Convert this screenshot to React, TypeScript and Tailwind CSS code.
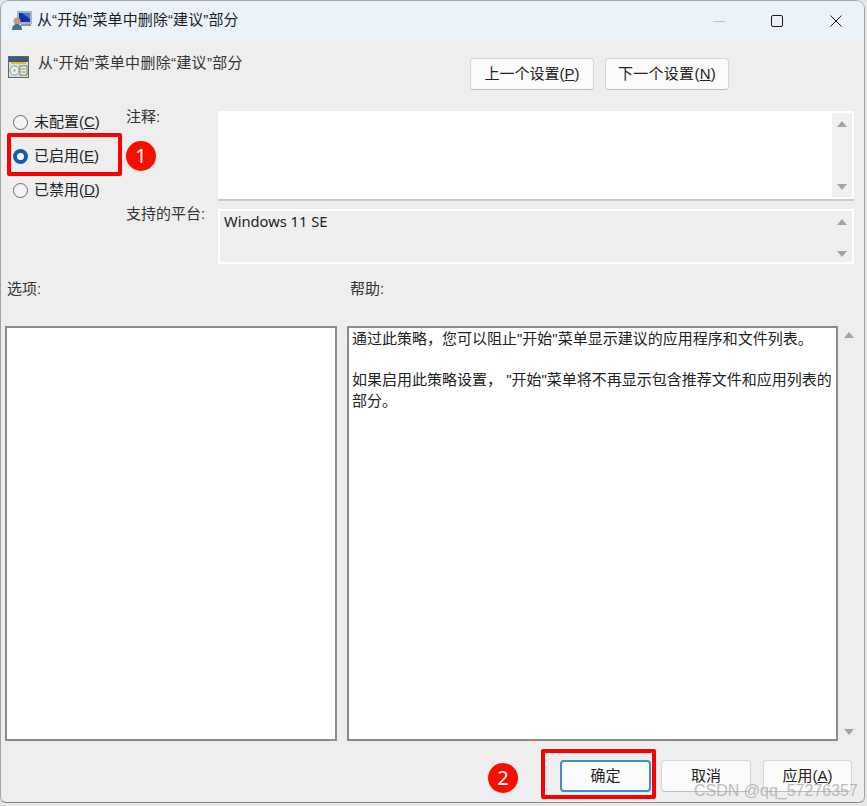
import React from 'react';

const cjk = 'font-["Liberation_Sans","Noto_Sans_CJK_SC",sans-serif]';

const Arrow = ({ up }: { up?: boolean }) => (
  <svg width="10" height="6" viewBox="0 0 10 6" className="block">
    <path d={up ? 'M5 0 L10 6 L0 6 Z' : 'M0 0 L10 0 L5 6 Z'} fill="#a3a3a3" />
  </svg>
);

const ScrollBar = ({ className }: { className: string }) => (
  <div className={`flex flex-col items-center justify-between ${className}`}>
    <Arrow up />
    <Arrow />
  </div>
);

const Radio = ({ checked, label, keyName }: { checked?: boolean; label: string; keyName: string }) => (
  <div className="flex items-center gap-[6px] h-[20px]">
    {checked ? (
      <span className="w-[15px] h-[15px] rounded-full bg-[#0a5fb0] flex items-center justify-center">
        <span className="w-[7px] h-[7px] rounded-full bg-white" />
      </span>
    ) : (
      <span className="w-[15px] h-[15px] rounded-full border-[1.5px] border-[#6a6a6a] bg-[#f4f4f4]" />
    )}
    <span className="text-[15px] text-[#222]">
      {label}(<span className="underline">{keyName}</span>)
    </span>
  </div>
);

const Button = ({ className, children }: { className: string; children: React.ReactNode }) => (
  <button className={`h-[32px] rounded-[4px] bg-[#fbfbfb] border border-[#d6d6d6] border-b-[#bdbdbd] text-[15px] text-[#222] ${className}`}>
    {children}
  </button>
);

const App: React.FC = () => {
  return (
    <div className={`relative w-[867px] h-[806px] overflow-hidden bg-[#e8e8e8] ${cjk}`}>
      <div className="w-[865px] h-[803px] bg-[#eeeeee] border border-[#a3a3a3] border-b-[#8a8a8a] rounded-t-[9px] rounded-b-[6px] overflow-hidden flex flex-col">
        {/* barra de titulo */}
        <div className="h-[39px] shrink-0 bg-[#eaf3f9] flex items-center pl-[10px]">
          <svg width="21" height="21" viewBox="0 0 21 21" className="shrink-0">
            <rect x="6" y="1" width="15" height="13" fill="#aab4be" />
            <rect x="8" y="3" width="11" height="9" fill="#1233a8" />
            <path d="M11 3h8v6z" fill="#3f7be0" />
            <rect x="10" y="14" width="10" height="2" fill="#8b95a0" />
            <circle cx="6" cy="11" r="3.5" fill="#c99a70" />
            <path d="M1 20c0-4 2-6 5-6s5 2 5 6z" fill="#4a6f8f" />
          </svg>
          <span className="ml-[5px] text-[15px] tracking-[0.1px] text-[#1c1c1c]">从“开始”菜单中删除“建议”部分</span>
          <div className="ml-auto flex items-center">
            <svg width="12" height="12" viewBox="0 0 12 12" className="mr-[46px]">
              <path d="M0 6.5h12" stroke="#c2c2c2" strokeWidth="1" />
            </svg>
            <svg width="12" height="12" viewBox="0 0 12 12" className="mr-[47px]">
              <rect x="0.5" y="0.5" width="11" height="11" rx="1.5" fill="none" stroke="#1a1a1a" strokeWidth="1" />
            </svg>
            <svg width="12" height="12" viewBox="0 0 12 12" className="mr-[22px]">
              <path d="M0.5 0.5 11.5 11.5M11.5 0.5 0.5 11.5" stroke="#1a1a1a" strokeWidth="1" />
            </svg>
          </div>
        </div>

        {/* cabecalho */}
        <div className="h-[71px] shrink-0 flex items-start pl-[7px]">
          <svg width="21" height="22" viewBox="0 0 21 22" className="mt-[16px] shrink-0">
            <rect x="0.5" y="0.5" width="20" height="21" fill="#d9dfdc" stroke="#4f6f6c" />
            <rect x="1" y="1" width="19" height="5" fill="#3f5f68" />
            <rect x="3" y="6" width="15" height="2" fill="#e0b93c" />
            <circle cx="6.5" cy="14.5" r="4.5" fill="#f1eee6" stroke="#8d9a94" />
            <circle cx="6.5" cy="14.5" r="1.2" fill="#8ab0a8" />
            <rect x="12" y="10" width="7" height="9" fill="#f6f3df" stroke="#6f7f70" />
            <path d="M13.5 13h4M13.5 16h4" stroke="#6f7f70" />
          </svg>
          <span className="ml-[9px] mt-[12px] text-[15px] tracking-[0.3px] text-[#333]">从“开始”菜单中删除“建议”部分</span>
          <div className="ml-auto mr-[135px] mt-[18px] flex gap-[11px]">
            <Button className="w-[124px]">
              上一个设置(<span className="underline">P</span>)
            </Button>
            <Button className="w-[124px] tracking-[0.3px]">
              下一个设置(<span className="underline">N</span>)
            </Button>
          </div>
        </div>

        {/* estado e comentario */}
        <div className="h-[153px] shrink-0 flex pl-[12px]">
          <div className="w-[113px] shrink-0 pt-[1px] flex flex-col gap-[14px]">
            <Radio label="未配置" keyName="C" />
            <Radio checked label="已启用" keyName="E" />
            <Radio label="已禁用" keyName="D" />
          </div>
          <div className="w-[92px] shrink-0 flex flex-col text-[15px] text-[#333]">
            <span className="h-[20px] -mt-[5px]">注释:</span>
            <span className="mt-[77px]">支持的平台:</span>
          </div>
          <div className="w-[636px] shrink-0 flex flex-col">
            <div className="h-[90px] bg-white border-b-2 border-[#c8c8c8] flex justify-end pr-[2px] py-[2px]">
              <ScrollBar className="w-[20px] bg-[#f0f0f0] pt-[8px] pb-[7px]" />
            </div>
            <div className="mt-[8px] h-[55px] bg-[#efefef] border-2 border-white flex justify-between">
              <span className="ml-[4px] -mt-[1px] text-[14.7px] text-[#222] font-['Noto_Sans',sans-serif]">Windows 11 SE</span>
              <ScrollBar className="w-[20px] pt-[8px] pb-[5px]" />
            </div>
          </div>
        </div>

        {/* rotulos */}
        <div className="h-[62px] shrink-0 flex pl-[6px] text-[15px] text-[#333]">
          <span className="w-[343px] mt-[14px]">选项:</span>
          <span className="mt-[14px]">帮助:</span>
        </div>

        {/* listas */}
        <div className="h-[415px] shrink-0 flex pl-[4px]">
          <div className="w-[332px] bg-white border-2 border-[#8c8c8c]" />
          <div className="ml-[10px] w-[491px] bg-white border-2 border-[#8c8c8c] pl-[3px] pr-[1px] pt-[1px] text-[15px] leading-[20.5px] text-[#222]">
            <p>通过此策略，您可以阻止"开始"菜单显示建议的应用程序和文件列表。</p>
            <p className="mt-[20.5px]">如果启用此策略设置， "开始"菜单将不再显示包含推荐文件和应用列表的部分。</p>
          </div>
          <ScrollBar className="w-[20px] ml-[1px] py-[6px]" />
        </div>

        {/* rodape */}
        <div className="flex-1 flex items-start justify-end pr-[12px] pt-[19px] gap-[10px]">
          <button className="w-[91px] h-[32px] rounded-[4px] bg-[#fbfbfb] border-2 border-[#3f8fd0] text-[15px] text-[#222]">确定</button>
          <Button className="w-[90px]">取消</Button>
          <Button className="w-[89px] ml-[2px]">
            应用(<span className="underline">A</span>)
          </Button>
        </div>
      </div>

      {/* anotacoes */}
      <div className="absolute left-[7px] top-[133px] w-[115px] h-[43px] border-[4px] border-[#fb0000] rounded-[2px]" />
      <div className="absolute left-[126px] top-[141px] w-[30px] h-[30px] rounded-full bg-[#f90f00] text-white text-[20px] flex items-center justify-center font-['Noto_Sans',sans-serif]">1</div>
      <div className="absolute left-[541px] top-[749px] w-[115px] h-[50px] border-[4px] border-[#fb0000] rounded-[2px]" />
      <div className="absolute left-[488px] top-[763px] w-[30px] h-[30px] rounded-full bg-[#f90f00] text-white text-[20px] flex items-center justify-center font-['Noto_Sans',sans-serif]">2</div>
      <span className="absolute left-[694px] top-[781px] whitespace-nowrap text-[16px] leading-[20px] text-[#a0a0a0]/70 font-['Liberation_Sans',sans-serif]">CSDN @qq_57276357</span>
    </div>
  );
};

export default App;
